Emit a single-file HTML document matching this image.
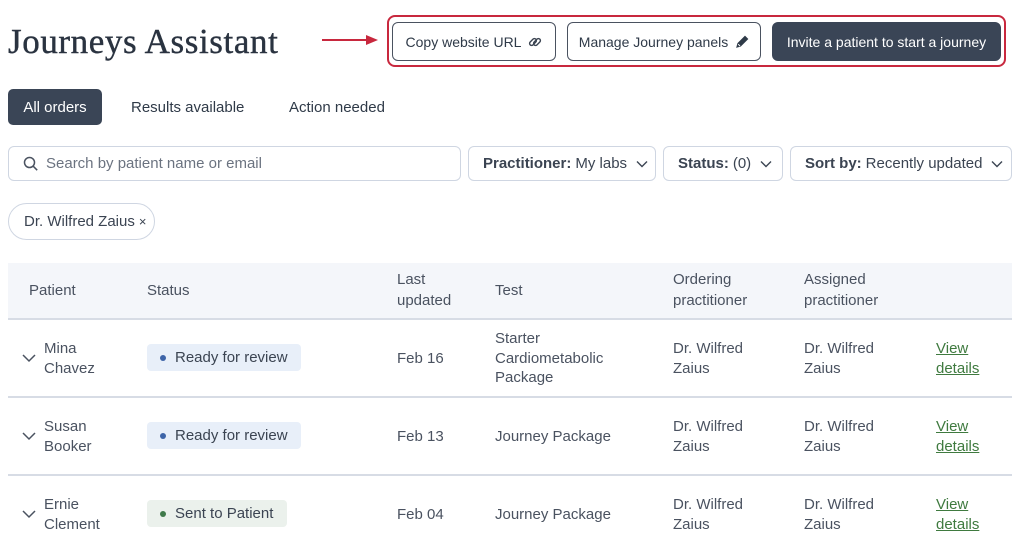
<!DOCTYPE html>
<html><head><style>
*{box-sizing:border-box;margin:0;padding:0}
body{width:1024px;height:552px;overflow:hidden;background:#fff;font-family:"Liberation Sans",sans-serif;color:#3b4452;position:relative}
.a{position:absolute;white-space:nowrap}
h1{position:absolute;left:8px;top:22px;font-family:"Liberation Serif",serif;font-weight:normal;font-size:35px;color:#2a3340;letter-spacing:0.6px;-webkit-text-stroke:0.4px #2a3340}
.btn{position:absolute;top:22px;height:39px;border:1.5px solid #4a5260;border-radius:6px;font-size:14px;display:flex;align-items:center;justify-content:center;color:#2f3a48}
.pill{position:absolute;top:146px;height:35px;border:1px solid #cfd6e2;border-radius:6px;font-size:15px;display:flex;align-items:center;padding-left:14px;color:#3b4452}
.pill svg.ch{margin-left:9px}
.hd{position:absolute;font-size:15px;color:#4a5260;line-height:21px}
.c{position:absolute;font-size:15px;line-height:19.5px;color:#4a5260}
.badge{position:absolute;height:27px;border-radius:4px;font-size:15px;display:flex;align-items:center;padding-left:13px}
.dot{width:6px;height:6px;border-radius:50%;margin-right:9px}
.ln{position:absolute;left:8px;width:1004px;height:1.5px;background:#d7dce5}
a{color:#3f7a3f;text-decoration:underline}
</style></head><body>
<h1>Journeys Assistant</h1>
<div class="a" style="left:322px;top:39px;width:46px;height:2px;background:#c8283e"></div>
<div class="a" style="left:366px;top:35px;width:0;height:0;border-left:12px solid #c8283e;border-top:5px solid transparent;border-bottom:5px solid transparent"></div>
<div class="a" style="left:387px;top:15px;width:619px;height:52px;border:2px solid #c8283e;border-radius:8px"></div>
<div class="btn" style="left:392px;width:164px">Copy website URL <svg width="14" height="14" viewBox="0 0 14 14" style="margin-left:7px" fill="none" stroke="#3b4452" stroke-width="1.4"><rect x="1" y="5" width="8" height="4" rx="2" transform="rotate(-45 5 7)"/><rect x="5" y="5" width="8" height="4" rx="2" transform="rotate(-45 9 7)"/></svg></div>
<div class="btn" style="left:567px;width:194px">Manage Journey panels <svg width="14" height="14" viewBox="0 0 14 14" style="margin-left:7px"><path d="M2 12l1-3.5 7-7 2.5 2.5-7 7z" fill="#2f3a48" stroke="#2f3a48" stroke-width="1.2"/><path d="M3.2 9.2l1.8 1.8" stroke="#fff" stroke-width="1"/></svg></div>
<div class="btn" style="left:772px;width:229px;background:#3a4556;border-color:#3a4556;color:#fff">Invite a patient to start a journey</div>

<div class="a" style="left:8px;top:89px;width:94px;height:36px;background:#3a4556;border-radius:5px;color:#fff;font-size:15px;display:flex;align-items:center;justify-content:center">All orders</div>
<div class="a" style="left:131px;top:99px;font-size:15px;color:#2f3a48">Results available</div>
<div class="a" style="left:289px;top:99px;font-size:15px;color:#2f3a48">Action needed</div>

<div class="pill" style="left:8px;width:453px;color:#6b7380"><svg width="16" height="16" viewBox="0 0 16 16" style="margin-right:7px"><circle cx="6.5" cy="6.5" r="5" fill="none" stroke="#4a5260" stroke-width="1.5"/><path d="M10.2 10.2l4 4" stroke="#4a5260" stroke-width="1.5"/></svg>Search by patient name or email</div>
<div class="pill" style="left:468px;width:188px"><b style="margin-right:4px">Practitioner:</b>My labs<svg class="ch" width="12" height="8"><path d="M1 1.5l5 5 5-5" fill="none" stroke="#3b4452" stroke-width="1.4"/></svg></div>
<div class="pill" style="left:663px;width:120px"><b style="margin-right:4px">Status:</b>(0)<svg class="ch" width="12" height="8"><path d="M1 1.5l5 5 5-5" fill="none" stroke="#3b4452" stroke-width="1.4"/></svg></div>
<div class="pill" style="left:790px;width:222px"><b style="margin-right:4px">Sort by:</b>Recently updated<svg class="ch" width="12" height="8"><path d="M1 1.5l5 5 5-5" fill="none" stroke="#3b4452" stroke-width="1.4"/></svg></div>

<div class="a" style="left:8px;top:203px;width:147px;height:37px;border:1px solid #cfd6e2;border-radius:19px;font-size:15px;display:flex;align-items:center;padding-left:15px">Dr. Wilfred Zaius <span style="margin-left:4px;font-size:13px">×</span></div>

<div class="a" style="left:8px;top:263px;width:1004px;height:55px;background:#f4f6fa"></div>
<div class="ln" style="top:318px"></div>
<div class="ln" style="top:396px"></div>
<div class="ln" style="top:474px"></div>
<div class="hd" style="left:29px;top:280px">Patient</div>
<div class="hd" style="left:147px;top:280px">Status</div>
<div class="hd" style="left:397px;top:269px">Last<br>updated</div>
<div class="hd" style="left:495px;top:280px">Test</div>
<div class="hd" style="left:673px;top:269px">Ordering<br>practitioner</div>
<div class="hd" style="left:804px;top:269px">Assigned<br>practitioner</div>

<svg class="a" style="left:22px;top:353px" width="14" height="10"><path d="M1 2l6 6 6-6" fill="none" stroke="#4a5260" stroke-width="1.5"/></svg>
<div class="c" style="left:44px;top:339px">Mina<br>Chavez</div>
<div class="badge" style="left:147px;top:344px;width:154px;background:#e8eff9"><span class="dot" style="background:#3d64a8"></span>Ready for review</div>
<div class="c" style="left:397px;top:349px">Feb 16</div>
<div class="c" style="left:495px;top:329px">Starter<br>Cardiometabolic<br>Package</div>
<div class="c" style="left:673px;top:339px">Dr. Wilfred<br>Zaius</div>
<div class="c" style="left:804px;top:339px">Dr. Wilfred<br>Zaius</div>
<div class="c" style="left:936px;top:339px"><a>View</a><br><a>details</a></div>

<svg class="a" style="left:22px;top:431px" width="14" height="10"><path d="M1 2l6 6 6-6" fill="none" stroke="#4a5260" stroke-width="1.5"/></svg>
<div class="c" style="left:44px;top:417px">Susan<br>Booker</div>
<div class="badge" style="left:147px;top:422px;width:154px;background:#e8eff9"><span class="dot" style="background:#3d64a8"></span>Ready for review</div>
<div class="c" style="left:397px;top:427px">Feb 13</div>
<div class="c" style="left:495px;top:427px">Journey Package</div>
<div class="c" style="left:673px;top:417px">Dr. Wilfred<br>Zaius</div>
<div class="c" style="left:804px;top:417px">Dr. Wilfred<br>Zaius</div>
<div class="c" style="left:936px;top:417px"><a>View</a><br><a>details</a></div>

<svg class="a" style="left:22px;top:509px" width="14" height="10"><path d="M1 2l6 6 6-6" fill="none" stroke="#4a5260" stroke-width="1.5"/></svg>
<div class="c" style="left:44px;top:495px">Ernie<br>Clement</div>
<div class="badge" style="left:147px;top:500px;width:140px;background:#ebf1ec"><span class="dot" style="background:#3f7a4a"></span>Sent to Patient</div>
<div class="c" style="left:397px;top:505px">Feb 04</div>
<div class="c" style="left:495px;top:505px">Journey Package</div>
<div class="c" style="left:673px;top:495px">Dr. Wilfred<br>Zaius</div>
<div class="c" style="left:804px;top:495px">Dr. Wilfred<br>Zaius</div>
<div class="c" style="left:936px;top:495px"><a>View</a><br><a>details</a></div>
</body></html>
